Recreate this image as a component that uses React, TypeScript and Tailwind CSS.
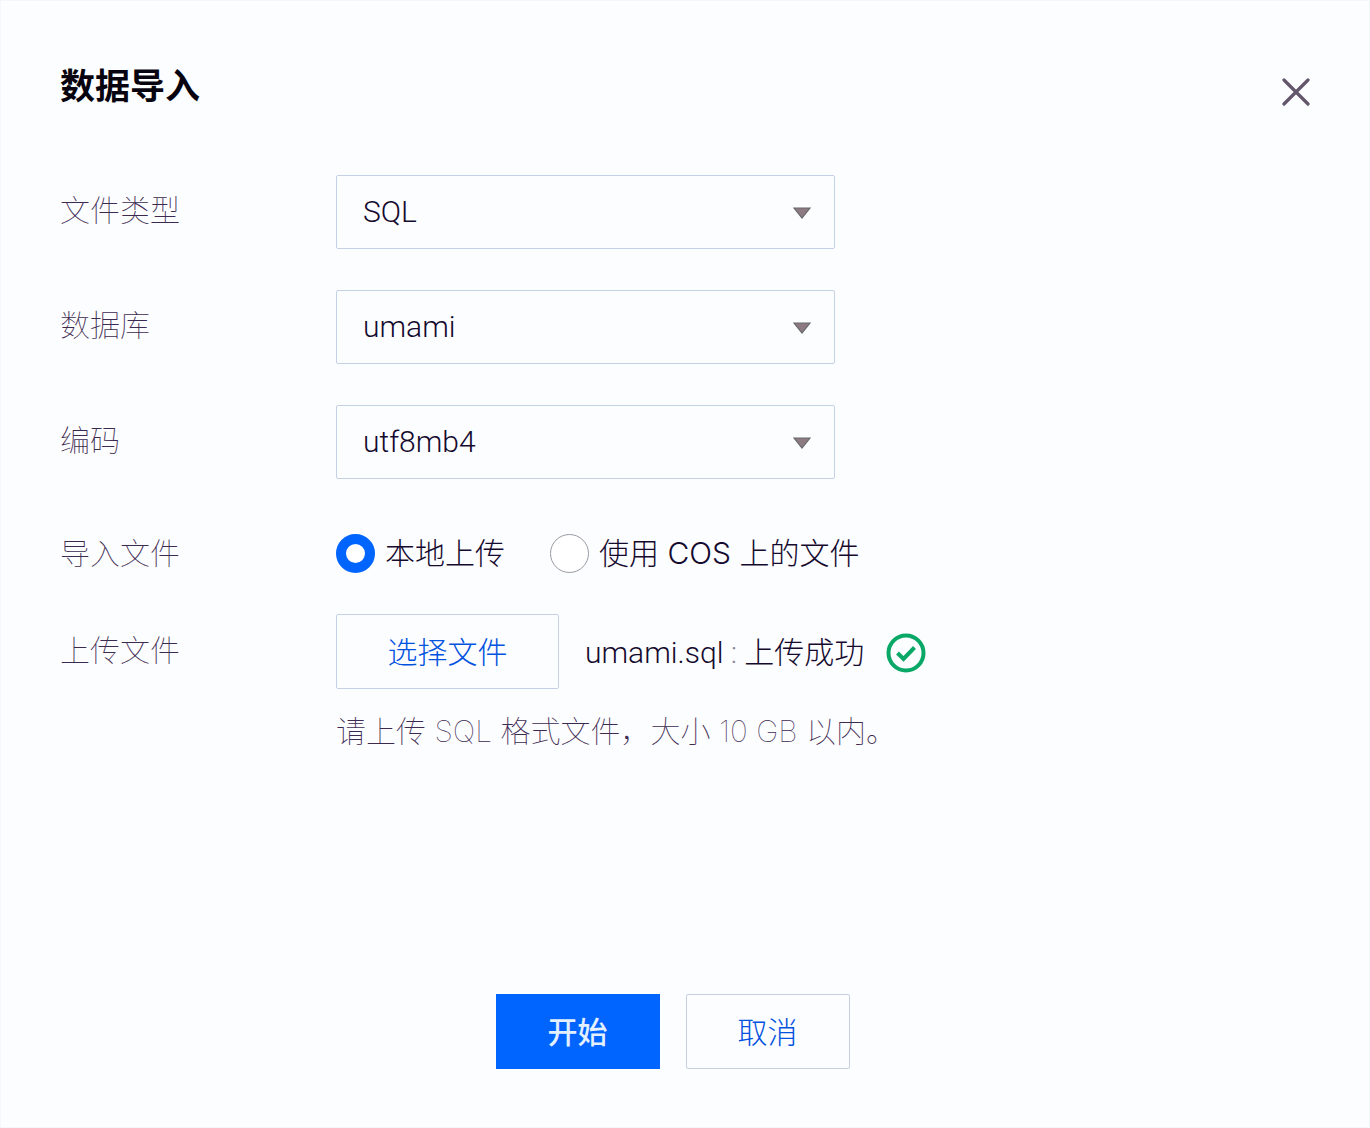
import { useState } from "react";
import type { ReactNode } from "react";

function SelectField({ id, label, options }: { id: string; label: string; options: string[] }) {
  return (
    <div className="flex items-center">
      <label htmlFor={id} className="w-[276px] shrink-0 pb-1 font-thin text-[#3c2a50]">
        {label}
      </label>
      <div className="relative w-full max-w-[499px]">
        <select
          id={id}
          className="block h-[74px] w-full appearance-none rounded-xs border border-[#c5d2e5] bg-[#fcfdff] pr-14 pl-[26px] font-['Roboto','Noto_Sans_CJK_SC',sans-serif] text-[#150a2e] outline-none"
        >
          {options.map((option) => (
            <option key={option}>{option}</option>
          ))}
        </select>
        <svg
          className="pointer-events-none absolute top-8 right-6 h-3 w-[18px]"
          viewBox="0 0 18 12"
          aria-hidden="true"
        >
          <path d="M1 1H17L9 11Z" fill="#8c7a80" stroke="#67686c" strokeWidth="1.2" />
        </svg>
      </div>
    </div>
  );
}

function SourceOption({
  checked,
  onSelect,
  children,
}: {
  checked: boolean;
  onSelect: () => void;
  children: ReactNode;
}) {
  return (
    <label className="flex items-center gap-[10px]">
      <input
        type="radio"
        name="source"
        checked={checked}
        onChange={onSelect}
        className="size-[39px] shrink-0 appearance-none rounded-full border border-[#9a9ba3] bg-white checked:border-[10px] checked:border-[#0064ff]"
      />
      {children}
    </label>
  );
}

export default function App() {
  const [source, setSource] = useState("local");

  return (
    <main
      role="dialog"
      aria-labelledby="dialog-title"
      className="flex min-h-screen flex-col border border-[#f3f6fa] bg-[#fcfdff] px-[59px] pt-[59px] pb-[58px] font-['Inter','Noto_Sans_CJK_SC',sans-serif] text-[30px] leading-10 font-light text-[#150a2e]"
    >
      <header className="flex items-start justify-between">
        <h1 id="dialog-title" className="text-[35px] leading-[52px] font-bold text-[#08040f]">
          数据导入
        </h1>
        <button type="button" aria-label="关闭" className="mt-[18px]">
          <svg className="size-7" viewBox="2 2 28 28" aria-hidden="true">
            <path
              d="M4 4L28 28M28 4L4 28"
              stroke="#62566a"
              strokeWidth="3.2"
              strokeLinecap="round"
            />
          </svg>
        </button>
      </header>

      <form className="flex flex-1 flex-col pt-[63px]" onSubmit={(event) => event.preventDefault()}>
        <div className="flex flex-col gap-[41px]">
          <SelectField id="file-type" label="文件类型" options={["SQL"]} />
          <SelectField id="database" label="数据库" options={["umami"]} />
          <SelectField id="charset" label="编码" options={["utf8mb4"]} />
        </div>

        <div role="radiogroup" aria-labelledby="source-label" className="mt-[54px] flex items-center">
          <span id="source-label" className="w-[276px] shrink-0 font-thin text-[#3c2a50]">
            导入文件
          </span>
          <div className="flex items-center gap-[45px]">
            <SourceOption checked={source === "local"} onSelect={() => setSource("local")}>
              本地上传
            </SourceOption>
            <SourceOption checked={source === "cos"} onSelect={() => setSource("cos")}>
              使用 COS 上的文件
            </SourceOption>
          </div>
        </div>

        <div className="mt-[41px] flex">
          <span id="upload-label" className="mt-4 w-[276px] shrink-0 font-thin text-[#3c2a50]">
            上传文件
          </span>
          <div>
            <div className="flex items-center">
              <button
                type="button"
                className="h-[75px] w-[223px] rounded-xs border border-[#c5d2e5] text-[#0052e0]"
              >
                选择文件
              </button>
              <div className="flex items-center pt-[2px] pl-[26px]">
                <p className="font-['Roboto','Noto_Sans_CJK_SC',sans-serif]">
                  umami.sql <span className="text-[#8b8795]">:</span> 上传成功
                </p>
                <svg
                  className="ml-[22px] size-10"
                  viewBox="0 0 40 40"
                  fill="none"
                  aria-hidden="true"
                >
                  <circle cx="20" cy="20" r="17.5" stroke="#0aa867" strokeWidth="4" />
                  <path d="M11.5 20L17.5 26L28.5 14.5" stroke="#0aa867" strokeWidth="4" />
                </svg>
              </div>
            </div>
            <p className="mt-[22px] font-thin text-[#3c2a50]">
              请上传 SQL 格式文件，大小 10 GB 以内。
            </p>
          </div>
        </div>

        <footer className="mt-auto flex justify-center gap-[26px] pr-[25px]">
          <button type="submit" className="h-[75px] w-[164px] bg-[#0064ff] font-medium text-[#e3f0ff]">
            开始
          </button>
          <button
            type="button"
            className="h-[75px] w-[164px] rounded-xs border border-[#c5cfe0] text-[#0052e0]"
          >
            取消
          </button>
        </footer>
      </form>
    </main>
  );
}
